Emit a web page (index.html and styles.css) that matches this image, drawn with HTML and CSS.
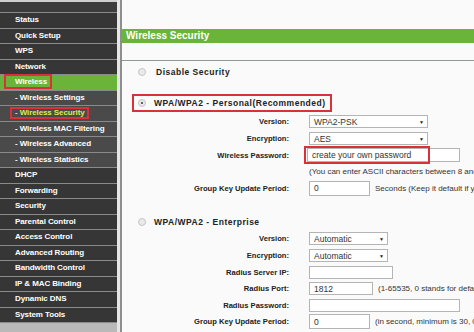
FILE: index.html
```html
<!DOCTYPE html>
<html lang="en">
  <head>
    <meta charset="UTF-8" />
    <title>Wireless Security</title>
    <link rel="stylesheet" href="styles.css">
  </head>
  <body>
    <div class="menu">
      <div class="menuTop"></div>
      <div class="item">Status</div>
      <div class="item">Quick Setup</div>
      <div class="item">WPS</div>
      <div class="item">Network</div>
      <div class="item active"><span class="mark markMain">Wireless</span></div>
      <div class="item sub">- Wireless Settings</div>
      <div class="item sub current"><span class="mark markSub">- Wireless Security</span></div>
      <div class="item sub">- Wireless MAC Filtering</div>
      <div class="item sub">- Wireless Advanced</div>
      <div class="item sub">- Wireless Statistics</div>
      <div class="item">DHCP</div>
      <div class="item">Forwarding</div>
      <div class="item">Security</div>
      <div class="item">Parental Control</div>
      <div class="item">Access Control</div>
      <div class="item">Advanced Routing</div>
      <div class="item">Bandwidth Control</div>
      <div class="item">IP &amp; MAC Binding</div>
      <div class="item">Dynamic DNS</div>
      <div class="item">System Tools</div>
    </div>
    <div class="gap"></div>
    <div class="main">
      <div class="title">Wireless Security</div>
      <div class="rule"></div>

      <div class="option">
        <span class="radio"></span>
        <span>Disable Security</span>
      </div>

      <div class="option boxed">
        <span class="radio checked"></span>
        <span>WPA/WPA2 - Personal(Recommended)</span>
      </div>
      <div class="form">
        <label>Version:</label>
        <div class="field"><span class="select wide">WPA2-PSK<i>&#9660;</i></span></div>
        <label>Encryption:</label>
        <div class="field"><span class="select wide">AES<i>&#9660;</i></span></div>
        <label>Wireless Password:</label>
        <div class="field"><span class="pwWrap"><span class="input pw">create your own password</span></span></div>
        <label></label>
        <div class="field note">(You can enter ASCII characters between 8 and 63 or Hexadecimal characters between 8 and 64.)</div>
        <label>Group Key Update Period:</label>
        <div class="field"><span class="input short">0</span><span class="note">Seconds (Keep it default if you are not sure, minimum is 30, 0 means no update)</span></div>
      </div>

      <div class="option enterprise">
        <span class="radio"></span>
        <span>WPA/WPA2 - Enterprise</span>
      </div>
      <div class="form">
        <label>Version:</label>
        <div class="field"><span class="select narrow">Automatic<i>&#9660;</i></span></div>
        <label>Encryption:</label>
        <div class="field"><span class="select narrow">Automatic<i>&#9660;</i></span></div>
        <label>Radius Server IP:</label>
        <div class="field"><span class="input ip"></span></div>
        <label>Radius Port:</label>
        <div class="field"><span class="input port">1812</span><span class="note">(1-65535, 0 stands for default port 1812)</span></div>
        <label>Radius Password:</label>
        <div class="field"><span class="input long"></span></div>
        <label>Group Key Update Period:</label>
        <div class="field"><span class="input short">0</span><span class="note">(in second, minimum is 30, 0 means no update)</span></div>
      </div>
    </div>
  </body>
</html>
```

FILE: styles.css
```css
* {
  margin: 0;
  padding: 0;
  box-sizing: border-box;
  font-family: "Liberation Sans", Arial, sans-serif;
}
body {
  display: flex;
  width: 474px;
  height: 332px;
  overflow: hidden;
  background-color: #fafafa;
}
.menu {
  width: 117px;
  flex-shrink: 0;
  background-color: #b9b9b9;
}
.menuTop {
  height: 13px;
  background-color: #3c3c3c;
  border-top: 2px solid #cfcfcf;
  border-bottom: 1px solid #8a8a8a;
}
.item {
  height: 15.5px;
  line-height: 14.5px;
  padding-left: 15px;
  background-color: #363636;
  border-bottom: 1px solid #8a8a8a;
  color: #fff;
  font-size: 8px;
  font-weight: bold;
  letter-spacing: -0.1px;
  white-space: nowrap;
}
.item.sub {
  background-color: #4a4a4a;
}
.item.active {
  background-color: #6bb43a;
}
.item.current {
  color: #dcec4e;
}
.mark {
  position: relative;
}
.mark::after {
  content: "";
  position: absolute;
  border: 2px solid #d8313a;
}
.markMain::after {
  top: -3px;
  bottom: -3px;
  left: -11px;
  right: -5px;
}
.markSub::after {
  top: -1px;
  bottom: -2px;
  left: -5px;
  right: -4px;
}
.gap {
  width: 3px;
  flex-shrink: 0;
  background-color: #e6e6e6;
}
.main {
  flex: 1;
  min-width: 0;
  overflow: hidden;
  border-left: 2px solid #8e8e8e;
  padding-top: 29px;
  white-space: nowrap;
}
.title {
  height: 14px;
  line-height: 14px;
  padding-left: 4px;
  background-color: #6bb43a;
  color: #fff;
  font-size: 10px;
  font-weight: bold;
}
.rule {
  margin-top: 17px;
  height: 1px;
  background-color: #8d9a98;
}
.option {
  display: flex;
  align-items: center;
  height: 16px;
  margin-top: 3px;
  padding-left: 16px;
  gap: 10px;
  font-size: 8.5px;
  font-weight: bold;
  letter-spacing: 0.5px;
  color: #222;
}
.option.boxed {
  display: inline-flex;
  height: 18px;
  margin: 14px 0 1.7px 10px;
  padding: 0 4px 0 4px;
  gap: 8px;
  border: 2px solid #d8313a;
}
.option.enterprise {
  height: 18px;
  margin-top: 16px;
  gap: 8px;
}
.radio {
  width: 8px;
  height: 8px;
  border-radius: 50%;
  border: 1px solid #c6c6c6;
  background-color: #e9e9e9;
  position: relative;
}
.radio.checked::after {
  content: "";
  position: absolute;
  left: 2px;
  top: 2px;
  width: 2px;
  height: 2px;
  border-radius: 50%;
  background-color: #333;
}
.form {
  display: grid;
  grid-template-columns: 167px 1fr;
  grid-auto-rows: 16.6px;
  column-gap: 20px;
  align-items: center;
}
.form label {
  text-align: right;
  font-size: 7.6px;
  font-weight: bold;
  color: #222;
}
.field {
  display: flex;
  align-items: center;
  gap: 5px;
  min-width: 0;
}
.select,
.input {
  display: flex;
  align-items: center;
  height: 13px;
  padding-left: 4px;
  border: 1px solid #b4b4b4;
  background-color: #fff;
  font-size: 8.5px;
  color: #333;
  flex-shrink: 0;
}
.select {
  justify-content: space-between;
  padding-right: 3px;
}
.select i {
  font-style: normal;
  font-size: 5px;
  color: #222;
}
.wide {
  width: 119px;
}
.narrow {
  width: 79px;
}
.pwWrap {
  position: relative;
  margin-left: -2px;
}
.pwWrap::after {
  content: "";
  position: absolute;
  top: -2px;
  bottom: -2px;
  left: -3px;
  width: 122px;
  border: 2px solid #d8313a;
}
.pw {
  width: 153px;
  height: 14px;
}
.short {
  width: 61px;
  height: 15px;
}
.ip {
  width: 84px;
}
.port {
  width: 64px;
}
.long {
  width: 151px;
}
.note {
  font-size: 8px;
  color: #333;
}
```
